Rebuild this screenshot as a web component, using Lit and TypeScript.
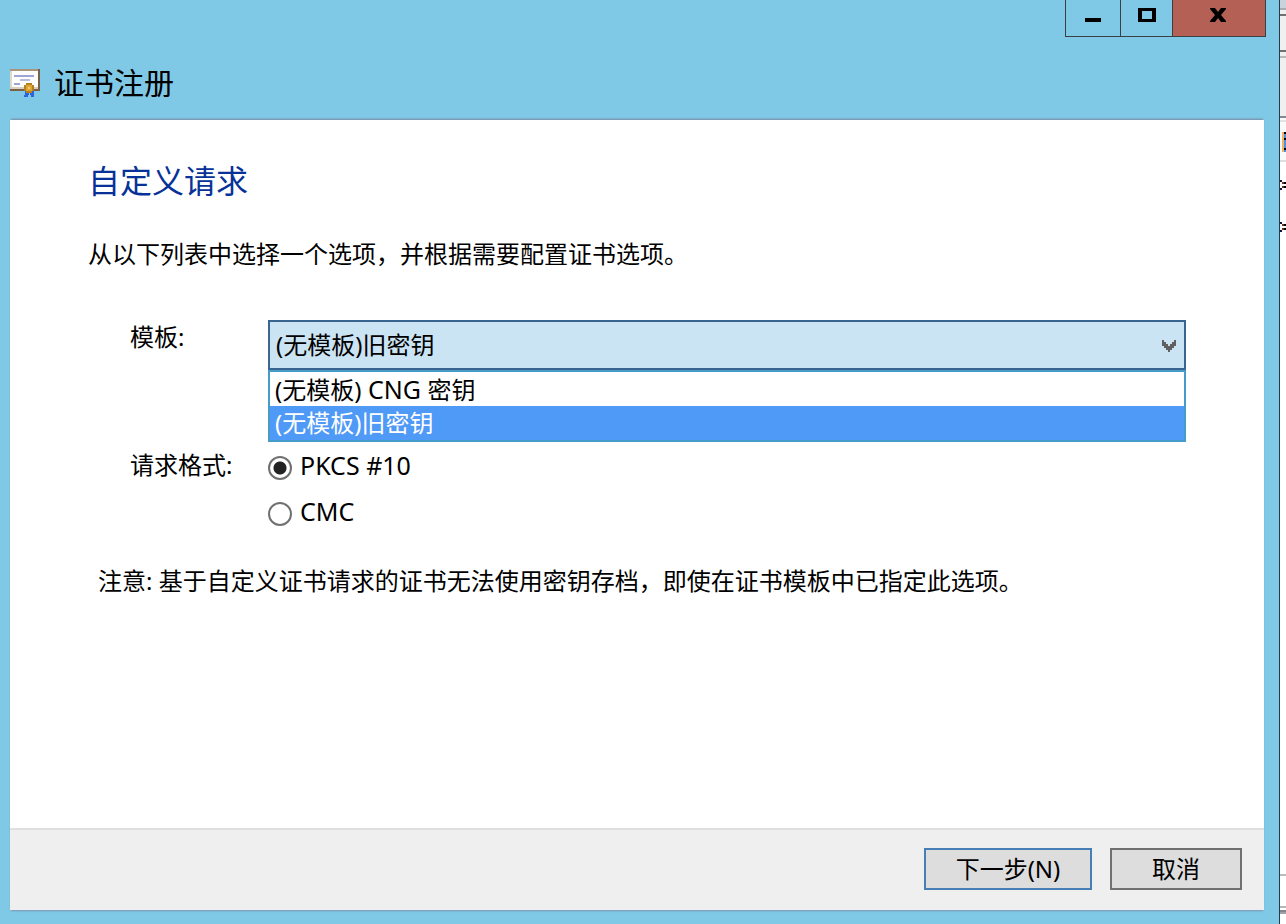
import { LitElement, html, css, svg } from "lit";
import { customElement, state } from "lit/decorators.js";

const TEMPLATES = [
  html`(无模板)<span class="latin"> CNG </span>密钥`,
  html`(无模板)旧密钥`,
];
const FORMATS = ["PKCS #10", "CMC"];

const certificateIcon = svg`
  <svg class="app-icon" viewBox="0 0 30 28" shape-rendering="crispEdges" aria-hidden="true">
    <rect width="30" height="22" fill="#7a6248" />
    <rect width="28" height="2" fill="#a8957c" />
    <rect y="2" width="28" height="18" fill="#f7f5f0" />
    <rect x="2" y="2" width="26" height="16" fill="#fdfdfb" />
    <rect y="2" width="2" height="18" fill="#dfd9cd" />
    <rect y="18" width="28" height="2" fill="#d8cfc0" />
    <rect x="4" y="6" width="20" height="2" fill="#9da5d8" />
    <rect x="10" y="10" width="10" height="2" fill="#b9bde0" />
    <rect x="4" y="14" width="6" height="2" fill="#9da5d8" />
    <path d="M15 22h4v4h-1v2h-4v-2h1zM20 22h4v6h-3v-2h-1z" fill="#2f62dd" />
    <path d="M16 14h6v2h2v6h-2v2h-6v-2h-2v-6h2z" fill="#b5801f" />
    <rect x="16" y="16" width="6" height="6" fill="#dda832" />
    <rect x="18" y="18" width="2" height="2" fill="#f3d078" />
  </svg>`;

@customElement("app-root")
export class AppRoot extends LitElement {
  @state() private template = 1;
  @state() private format = 0;

  static styles = css`
    :host {
      display: block;
      font-family: "Noto Sans", "Noto Sans CJK SC", sans-serif;
      font-size: 24px;
      line-height: 34px;
      color: #000;
    }
    * {
      box-sizing: border-box;
    }
    button,
    select {
      font: inherit;
      color: inherit;
    }
    .desktop {
      display: flex;
      min-height: 100vh;
      background: #fff;
    }
    .window {
      flex: 1;
      display: flex;
      flex-direction: column;
      padding: 0 15px 14px 10px;
      border-right: 1px solid #243a47;
      background: #80c9e6;
    }
    .controls {
      display: flex;
      align-self: flex-end;
      height: 37px;
      margin-right: -2px;
      border: 1px solid #3a3f44;
      border-top: 0;
    }
    .control {
      display: flex;
      justify-content: center;
      width: 55px;
      padding: 8px 0 0;
      border: 0;
      border-right: 1px solid #3a3f44;
      background: none;
    }
    .control.max {
      width: 52px;
    }
    .control.close {
      width: 92px;
      border-right: 0;
      background: #b56054;
    }
    .control svg {
      width: 18px;
      height: 14px;
    }
    .titlebar {
      display: flex;
      align-items: center;
      gap: 14px;
      height: 83px;
      padding-top: 8px;
      font-size: 30px;
      line-height: 40px;
    }
    .app-icon {
      width: 30px;
      height: 28px;
    }
    .title {
      margin: 0;
      font: inherit;
    }
    .body {
      flex: 1;
      display: flex;
      flex-direction: column;
      background: #fff;
      box-shadow: 0 -2px 2px -1px #7785a0, 0 2px 2px -1px #7b95b0;
    }
    .content {
      flex: 1;
      padding: 41px 78px 24px;
    }
    .heading {
      margin: 0 0 36px;
      font-size: 32px;
      line-height: 40px;
      font-weight: 400;
      color: #083298;
    }
    .text {
      margin: 0;
    }
    .form {
      display: grid;
      grid-template-columns: 138px 1fr;
      margin: 49px 0 36px;
      padding-left: 42px;
      row-gap: 78px;
    }
    .combo {
      position: relative;
    }
    .select {
      display: block;
      width: 100%;
      height: 50px;
      padding: 0 40px 0 6px;
      border: 2px solid #3a6590;
      border-radius: 0;
      outline: 0;
      appearance: none;
      background: #cbe4f3;
    }
    .chevron {
      position: absolute;
      right: 10px;
      top: 20px;
      width: 14px;
      height: 12px;
      pointer-events: none;
    }
    .list {
      position: absolute;
      top: 100%;
      left: 0;
      right: 0;
      margin: 0;
      padding: 0;
      border: 2px solid #469bc9;
      background: #fff;
      list-style: none;
    }
    .option {
      height: 34px;
      padding-left: 5px;
    }
    .option.selected {
      background: #4f99f7;
      color: #fff;
    }
    .latin {
      font-size: 25px;
      white-space: pre;
    }
    .formats {
      display: grid;
      gap: 12px;
    }
    .radio-row {
      display: flex;
      align-items: center;
      gap: 8px;
      height: 34px;
    }
    .radio {
      appearance: none;
      width: 24px;
      height: 24px;
      margin: 5px 0 0;
      border: 2px solid #707070;
      border-radius: 50%;
      background: #fff;
    }
    .radio:checked {
      background: radial-gradient(circle, #222 6px, #fff 7px);
    }
    .note {
      margin: 0;
      padding-left: 10px;
    }
    .footer {
      display: flex;
      justify-content: flex-end;
      gap: 18px;
      padding: 18px 22px 20px;
      border-top: 2px solid #dfdfdf;
      background: #efefef;
    }
    .button {
      width: 132px;
      height: 42px;
      padding: 0;
      border: 2px solid #707070;
      border-radius: 0;
      background: #ddd;
    }
    .button.primary {
      width: 168px;
      border-color: #467eb5;
    }
    .behind {
      display: flex;
      flex-direction: column;
      justify-content: space-between;
      width: 6px;
    }
    .behind svg {
      display: block;
      width: 6px;
    }
    .behind-top {
      height: 240px;
    }
    .behind-bottom {
      height: 50px;
    }
  `;

  private pickTemplate(e: Event) {
    this.template = (e.target as HTMLSelectElement).selectedIndex;
  }

  render() {
    return html`
      <div class="desktop">
        <main class="window">
          <div class="controls">
            <button class="control" aria-label="最小化">
              <svg viewBox="0 0 18 14"><path d="M1 10h16v4H1z" /></svg>
            </button>
            <button class="control max" aria-label="最大化">
              <svg viewBox="0 0 18 14"><path d="M0 0h18v14H0zM4 3v8h10V3z" fill-rule="evenodd" /></svg>
            </button>
            <button class="control close" aria-label="关闭">
              <svg viewBox="0 0 18 14">
                <path d="M0 0h5l3 4 3-4h5v1l-5 6 5 6v1h-5l-3-4-3 4H0v-1l5-6-5-6z" />
              </svg>
            </button>
          </div>
          <header class="titlebar">
            ${certificateIcon}
            <h1 class="title">证书注册</h1>
          </header>
          <div class="body">
            <div class="content">
              <h2 class="heading">自定义请求</h2>
              <p class="text">从以下列表中选择一个选项，并根据需要配置证书选项。</p>
              <div class="form">
                <label for="template">模板:</label>
                <div class="combo">
                  <select id="template" class="select" @change=${this.pickTemplate}>
                    ${["(无模板) CNG 密钥", "(无模板)旧密钥"].map(
                      (t, i) => html`<option ?selected=${i === this.template}>${t}</option>`
                    )}
                  </select>
                  <svg class="chevron" viewBox="0 0 14 12" shape-rendering="crispEdges" aria-hidden="true">
                    <path
                      d="M0 0h2v2h2v2h2v2h2V4h2V2h2V0h2v6h-2v2h-2v2H8v2H6v-2H4V8H2V6H0z"
                      fill="#606060"
                    />
                  </svg>
                  <ul class="list" role="listbox" aria-label="模板">
                    ${TEMPLATES.map(
                      (t, i) => html`<li
                        class="option ${i === this.template ? "selected" : ""}"
                        role="option"
                        aria-selected=${i === this.template}
                        @click=${() => (this.template = i)}
                      >${t}</li>`
                    )}
                  </ul>
                </div>
                <span id="format-label">请求格式:</span>
                <div class="formats" role="radiogroup" aria-labelledby="format-label">
                  ${FORMATS.map(
                    (f, i) => html`<label class="radio-row">
                      <input
                        class="radio"
                        type="radio"
                        name="format"
                        .checked=${i === this.format}
                        @change=${() => (this.format = i)}
                      /><span class="latin">${f}</span></label>`
                  )}
                </div>
              </div>
              <p class="note">注意: 基于自定义证书请求的证书无法使用密钥存档，即使在证书模板中已指定此选项。</p>
            </div>
            <footer class="footer">
              <button class="button primary">下一步(N)</button>
              <button class="button">取消</button>
            </footer>
          </div>
        </main>
        <div class="behind" aria-hidden="true">
          <svg class="behind-top" viewBox="0 0 6 240" shape-rendering="crispEdges">
            <rect width="6" height="162" fill="#f0f0f0" />
            <rect width="6" height="8" fill="#c8d3dc" />
            <rect y="8" width="6" height="2" fill="#a9adb2" />
            <rect y="14" width="6" height="2" fill="#707070" />
            <rect y="50" width="6" height="2" fill="#707070" />
            <rect y="56" width="6" height="2" fill="#b8b8b8" />
            <rect y="116" width="6" height="2" fill="#858990" />
            <rect y="118" width="6" height="42" fill="#fafafa" />
            <rect y="120" width="6" height="2" fill="#e2e2e2" />
            <rect y="160" width="6" height="2" fill="#dedede" />
            <rect x="2" y="132" width="2" height="20" fill="#f5b463" />
            <rect x="4" y="132" width="2" height="20" fill="#4d91d9" />
            <path d="M4 132h2v2H4zM4 138h2v2H4zM4 148h2v2H4z" />
            <path d="M0 180h2v2H0zM0 188h2v2H0zM0 222h2v2H0zM0 230h2v2H0z" fill="#210b39" />
            <path d="M2 182h2v2H2zM2 186h2v2H2zM2 224h2v2H2zM2 228h2v2H2z" fill="#6d351b" />
            <path d="M4 182h2v2H4zM4 186h2v2H4zM4 224h2v2H4zM4 228h2v2H4z" />
          </svg>
          <svg class="behind-bottom" viewBox="0 0 6 50" shape-rendering="crispEdges">
            <rect width="6" height="2" fill="#bcbcbc" />
            <rect y="32" width="6" height="2" fill="#b7b7b7" />
            <rect y="36" width="6" height="2" fill="#85858b" />
            <rect y="38" width="6" height="2" fill="#a0a0a6" />
          </svg>
        </div>
      </div>
    `;
  }
}
